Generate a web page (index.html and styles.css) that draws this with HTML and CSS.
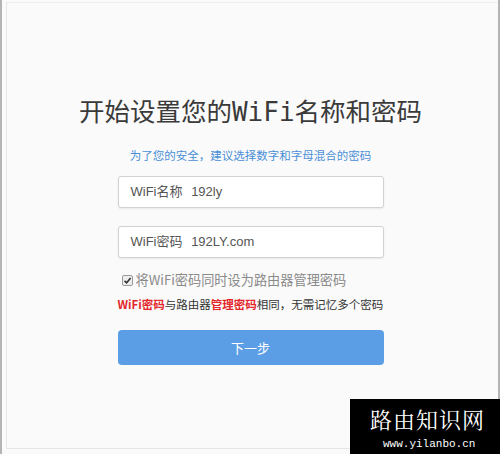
FILE: index.html
```html
<!DOCTYPE html>
<html lang="zh-CN">
<head>
    <meta charset="UTF-8">
    <meta name="viewport" content="width=device-width, initial-scale=1.0">
    <title>设置WiFi名称和密码</title>
    <link rel="stylesheet" href="styles.css">
</head>
<body>

    <div class="frame">
        <div class="panel">
            <h1 class="title">开始设置您的<span class="mono">WiFi</span>名称和密码</h1>
            <p class="tip">为了您的安全，建议选择数字和字母混合的密码</p>

            <!-- WiFi fields -->
            <div class="form">
                <div class="field">
                    <span class="label">WiFi名称</span>
                    <span class="value">192ly</span>
                </div>
                <div class="field last">
                    <span class="label">WiFi密码</span>
                    <span class="value">192LY.com</span>
                </div>

                <label class="check">
                    <span class="box">
                        <svg width="9" height="9" viewBox="0 0 9 9"><path d="M1.5 4.8 L3.6 6.8 L7.6 2" fill="none" stroke="#333" stroke-width="1.6"/></svg>
                    </span>
                    将WiFi密码同时设为路由器管理密码
                </label>

                <p class="note"><b>WiFi密码</b>与路由器<b>管理密码</b>相同，无需记忆多个密码</p>

                <button class="next">下一步</button>
            </div>
        </div>
    </div>

    <div class="mark">
        <div class="mark-name">路由知识网</div>
        <div class="mark-url">www.yilanbo.cn</div>
    </div>

</body>
</html>
```

FILE: styles.css
```css
body {
    font-family: "Noto Sans CJK SC", "Liberation Sans", sans-serif;
    background-color: #fafafa;
    margin: 0;
    padding: 0;
    width: 500px;
    height: 454px;
    overflow: hidden;
    position: relative;
}

.frame {
    height: 454px;
    box-sizing: border-box;
    border-left: 2px solid #b4b4b4;
    border-right: 2px solid #b4b4b4;
    padding: 2px 0 5px 4px;
}

.panel {
    height: 100%;
    box-sizing: border-box;
    border-top: 1px solid #eeeeee;
    border-left: 1px solid #e6e6e6;
    border-bottom: 1px solid #e6e6e6;
    padding: 87px 4px 0 0;
    text-align: center;
}

.title {
    margin: 0;
    font-size: 25.5px;
    font-weight: normal;
    color: #3a3a3a;
    line-height: 40px;
}

.mono {
    font-family: "DejaVu Sans Mono", monospace;
    font-size: 26px;
}

.tip {
    margin: 15px 0 0;
    font-size: 11.5px;
    line-height: 16px;
    color: #4a8fd6;
}

.form {
    width: 266px;
    margin: 13px auto 0;
    text-align: left;
}

.field {
    height: 32px;
    box-sizing: border-box;
    border: 1px solid #d2d2d2;
    border-radius: 3px;
    background-color: #fff;
    box-shadow: 0 1px 2px rgba(0, 0, 0, 0.08);
    padding-left: 12px;
    font-family: "Liberation Sans", "Noto Sans CJK SC", sans-serif;
    font-size: 13px;
    color: #555;
    line-height: 30px;
    margin-bottom: 18px;
}

.field.last {
    margin-bottom: 12px;
}

.field .label {
    margin-right: 5px;
}

.check {
    display: flex;
    align-items: center;
    gap: 3px;
    margin-left: 4px;
    font-size: 13.2px;
    color: #8a8a8a;
    line-height: 20px;
}

.box {
    width: 9px;
    height: 9px;
    border: 1px solid #999;
    border-radius: 2px;
    background-color: #eee;
    display: flex;
}

.note {
    margin: 5px 0 0;
    font-size: 11.5px;
    line-height: 18px;
    color: #333;
    white-space: nowrap;
}

.note b {
    color: #e3262a;
}

.next {
    display: block;
    width: 100%;
    height: 35px;
    margin-top: 17px;
    border: none;
    border-radius: 4px;
    background-color: #5c9ee6;
    color: #fff;
    font-family: "Noto Sans CJK SC", sans-serif;
    font-size: 13px;
}

/* watermark over the corner */
.mark {
    position: absolute;
    left: 350px;
    top: 399px;
    width: 150px;
    height: 55px;
    background-color: #000;
    color: #fff;
}

.mark-name {
    font-family: "Noto Serif CJK SC", "Noto Sans CJK SC", serif;
    font-size: 22px;
    line-height: 26px;
    margin: 7px 0 0 20px;
    letter-spacing: 1px;
}

.mark-url {
    font-family: "Liberation Mono", monospace;
    font-size: 11px;
    line-height: 14px;
    margin: 5px 0 0 33px;
}
```
